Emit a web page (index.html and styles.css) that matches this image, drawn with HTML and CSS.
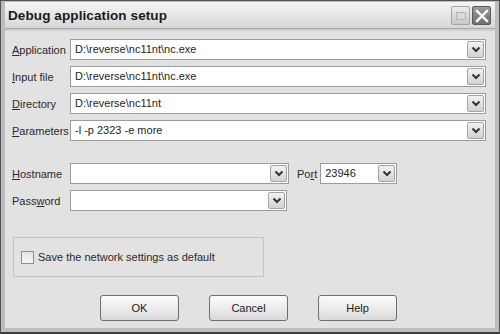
FILE: index.html
```html
<!DOCTYPE html>
<html>
<head>
<meta charset="utf-8">
<link rel="stylesheet" href="styles.css">
</head>
<body>
<div class="window">
  <div class="titlebar">
    <span class="title">Debug application setup</span>
    <div class="tbuttons">
      <span class="tbtn max"><span class="maxicon"></span></span>
      <span class="tbtn close"><svg width="14" height="14" viewBox="0 0 14 14"><path d="M2 2 L12 12 M12 2 L2 12" stroke="#fff" stroke-width="2.4" stroke-linecap="square"/></svg></span>
    </div>
  </div>
  <div class="content">
    <div class="rows">
      <div class="row">
        <label class="lbl"><u>A</u>pplication</label>
        <div class="combo wide"><span class="val">D:\reverse\nc11nt\nc.exe</span><span class="drop"><svg width="10" height="7" viewBox="0 0 10 7"><path d="M1.5 1.5 L5 5 L8.5 1.5" fill="none" stroke="#333" stroke-width="2"/></svg></span></div>
      </div>
      <div class="row">
        <label class="lbl"><u>I</u>nput file</label>
        <div class="combo wide"><span class="val">D:\reverse\nc11nt\nc.exe</span><span class="drop"><svg width="10" height="7" viewBox="0 0 10 7"><path d="M1.5 1.5 L5 5 L8.5 1.5" fill="none" stroke="#333" stroke-width="2"/></svg></span></div>
      </div>
      <div class="row">
        <label class="lbl"><u>D</u>irectory</label>
        <div class="combo wide"><span class="val">D:\reverse\nc11nt</span><span class="drop"><svg width="10" height="7" viewBox="0 0 10 7"><path d="M1.5 1.5 L5 5 L8.5 1.5" fill="none" stroke="#333" stroke-width="2"/></svg></span></div>
      </div>
      <div class="row">
        <label class="lbl"><u>P</u>arameters</label>
        <div class="combo wide"><span class="val">-l -p 2323 -e more</span><span class="drop"><svg width="10" height="7" viewBox="0 0 10 7"><path d="M1.5 1.5 L5 5 L8.5 1.5" fill="none" stroke="#333" stroke-width="2"/></svg></span></div>
      </div>
    </div>
    <div class="rows net">
      <div class="row">
        <label class="lbl"><u>H</u>ostname</label>
        <div class="combo host"><span class="val"></span><span class="drop"><svg width="10" height="7" viewBox="0 0 10 7"><path d="M1.5 1.5 L5 5 L8.5 1.5" fill="none" stroke="#333" stroke-width="2"/></svg></span></div>
        <label class="lbl port">Po<u>r</u>t</label>
        <div class="combo portbox"><span class="val">23946</span><span class="drop"><svg width="10" height="7" viewBox="0 0 10 7"><path d="M1.5 1.5 L5 5 L8.5 1.5" fill="none" stroke="#333" stroke-width="2"/></svg></span></div>
      </div>
      <div class="row">
        <label class="lbl">Pass<u>w</u>ord</label>
        <div class="combo pass"><span class="val"></span><span class="drop"><svg width="10" height="7" viewBox="0 0 10 7"><path d="M1.5 1.5 L5 5 L8.5 1.5" fill="none" stroke="#333" stroke-width="2"/></svg></span></div>
      </div>
    </div>
    <div class="group">
      <span class="check"></span>
      <span class="checktext">Save the network settings as default</span>
    </div>
    <div class="buttons">
      <button class="btn">OK</button>
      <button class="btn">Cancel</button>
      <button class="btn">Help</button>
    </div>
  </div>
</div>
</body>
</html>
```
FILE: styles.css
```css
html, body {
  margin: 0;
  padding: 0;
  background: #5e5e5e;
}
body {
  font-family: "Liberation Sans", Arial, sans-serif;
  font-size: 11px;
  color: #222;
}
.window {
  width: 500px;
  height: 334px;
  box-sizing: border-box;
  border: 1px solid #555;
  border-bottom: 2px solid #3c3c3c;
  background: #bdbdbd;
  padding: 1px 4px 4px 4px;
  display: flex;
  flex-direction: column;
}
.titlebar {
  height: 26px;
  flex: none;
  display: flex;
  align-items: center;
  justify-content: space-between;
  background: linear-gradient(#f6f6f6, #e4e4e4 55%, #d6d6d6);
  border-bottom: 1px solid #a8a8a8;
  padding: 0 4px 0 3px;
}
.title {
  font-weight: bold;
  font-size: 13.5px;
  color: #1a1a1a;
  letter-spacing: 0.1px;
}
.tbuttons {
  display: flex;
  gap: 2px;
  margin-top: 1px;
}
.tbtn {
  width: 19px;
  height: 19px;
  border-radius: 2px;
  display: flex;
  align-items: center;
  justify-content: center;
  box-sizing: border-box;
}
.max {
  background: linear-gradient(#ececec, #c8c8c8);
  border: 1px solid #a5a5a5;
}
.maxicon {
  width: 8px;
  height: 6px;
  border: 1px solid #b4b4b4;
  background: #dadada;
}
.close {
  background: linear-gradient(#9a9a9a, #6f6f6f);
  border: 1px solid #5a5a5a;
}
.content {
  flex: 1;
  background: #e2e2e2;
  border-top: 2px solid #cfcfcf;
  padding: 8px 0 0 7px;
  display: flex;
  flex-direction: column;
}
.rows {
  display: flex;
  flex-direction: column;
  gap: 6px;
}
.rows.net {
  margin-top: 22px;
}
.row {
  display: flex;
  align-items: center;
  height: 21px;
}
.lbl {
  width: 58px;
  flex: none;
  color: #2a2a2a;
  white-space: nowrap;
}
.combo {
  height: 21px;
  box-sizing: border-box;
  border: 1px solid #9c9c9c;
  background: #fff;
  display: flex;
  align-items: stretch;
  padding: 1px;
}
.combo .val {
  flex: 1;
  padding-left: 3px;
  line-height: 17px;
  color: #1e1e1e;
}
.drop {
  width: 17px;
  flex: none;
  box-sizing: border-box;
  border: 1px solid #a4a4a4;
  border-radius: 2px;
  background: linear-gradient(#f2f2f2, #d2d2d2);
  display: flex;
  align-items: center;
  justify-content: center;
}
.wide { width: 416px; }
.host { width: 219px; }
.pass { width: 217px; }
.lbl.port {
  width: auto;
  margin-left: 8px;
  margin-right: 3px;
}
.portbox { width: 77px; }
.group {
  margin-top: 26px;
  margin-left: 1px;
  width: 251px;
  height: 40px;
  box-sizing: border-box;
  border: 1px solid #c4c4c4;
  display: flex;
  align-items: center;
  padding-left: 7px;
}
.check {
  width: 13px;
  height: 13px;
  box-sizing: border-box;
  border: 1px solid #8e8e8e;
  background: linear-gradient(#e4e4e4, #f6f6f6);
  margin-right: 4px;
}
.checktext {
  color: #2a2a2a;
}
.buttons {
  display: flex;
  gap: 30px;
  margin-top: 18px;
  margin-left: 88px;
}
.btn {
  width: 79px;
  height: 26px;
  box-sizing: border-box;
  border: 1px solid #6e6e6e;
  border-radius: 3px;
  background: linear-gradient(#fbfbfb, #ececec 50%, #d9d9d9);
  font-family: "Liberation Sans", Arial, sans-serif;
  font-size: 11px;
  color: #222;
  padding: 0;
}
```
